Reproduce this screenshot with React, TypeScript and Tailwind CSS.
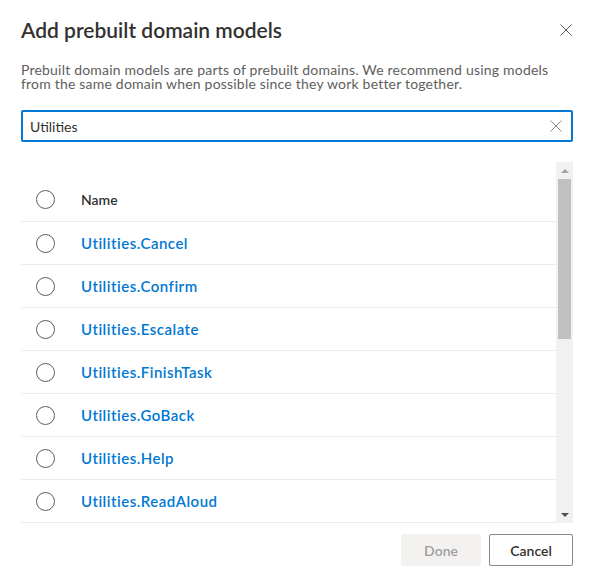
import React from 'react';

const items = [
  'Utilities.Cancel',
  'Utilities.Confirm',
  'Utilities.Escalate',
  'Utilities.FinishTask',
  'Utilities.GoBack',
  'Utilities.Help',
  'Utilities.ReadAloud',
];

function Cross({ size = 12, color = '#605e5c' }: { size?: number; color?: string }) {
  return (
    <svg width={size} height={size} viewBox="0 0 12 12" fill="none">
      <path d="M0.5 0.5L11.5 11.5M11.5 0.5L0.5 11.5" stroke={color} strokeWidth="1" />
    </svg>
  );
}

function Radio() {
  return <span className="block w-[19px] h-[19px] rounded-full border border-[#605e5c] bg-white" />;
}

export default function App() {
  return (
    <div className="w-[595px] h-[588px] bg-white text-[#323130] font-['Lato',sans-serif]">
      <div className="flex items-center justify-between pl-[21px] pr-[23px] pt-[16px]">
        <h1 className="text-[21px] leading-[28px] font-semibold">Add prebuilt domain models</h1>
        <button className="w-[12px] h-[12px] flex items-center justify-center">
          <Cross />
        </button>
      </div>

      <p className="mt-[19px] px-[21px] text-[14px] leading-[14px] tracking-[0.2px] text-[#605e5c] whitespace-nowrap">
        Prebuilt domain models are parts of prebuilt domains. We recommend using models
        <br />
        from the same domain when possible since they work better together.
      </p>

      <div className="mt-[19px] mx-[21px] w-[552px] h-[32px] border-2 border-[#0078d4] rounded-[2px] flex items-center pl-[7px] pr-[9px]">
        <span className="flex-1 text-[14px]">Utilities</span>
        <Cross color="#8a8886" />
      </div>

      <div className="mt-[20px] ml-[21px] w-[552px] h-[361px] flex">
        <div className="flex-1 overflow-hidden">
          <div className="pt-[16px]">
            <div className="h-[44px] flex items-center border-b border-[#edebe9] pl-[15px]">
              <Radio />
              <span className="ml-[26px] text-[14px] font-semibold text-[#323130]">Name</span>
            </div>
          </div>
          {items.map(item => (
            <div key={item} className="h-[43px] flex items-center border-b border-[#edebe9] pl-[15px]">
              <Radio />
              <span className="ml-[26px] text-[15px] font-semibold text-[#0078d4] tracking-[0.5px]">{item}</span>
            </div>
          ))}
        </div>
        <div className="w-[17px] h-full bg-[#f1f1f1] flex flex-col items-center">
          <div className="h-[17px] flex items-center justify-center">
            <span className="w-0 h-0 border-l-[4px] border-r-[4px] border-b-[4px] border-l-transparent border-r-transparent border-b-[#a3a3a3]" />
          </div>
          <div className="w-[13px] h-[160px] bg-[#c1c1c1]" />
          <div className="flex-1" />
          <div className="h-[17px] flex items-center justify-center">
            <span className="w-0 h-0 border-l-[4px] border-r-[4px] border-t-[4px] border-l-transparent border-r-transparent border-t-[#505050]" />
          </div>
        </div>
      </div>

      <div className="mt-[11px] pr-[22px] flex justify-end gap-[8px]">
        <button className="w-[80px] h-[32px] rounded-[2px] bg-[#f3f2f1] text-[14px] font-semibold text-[#a19f9d]">Done</button>
        <button className="w-[84px] h-[32px] rounded-[2px] border border-[#8a8886] bg-white text-[14px] font-semibold text-[#323130]">Cancel</button>
      </div>
    </div>
  );
}
